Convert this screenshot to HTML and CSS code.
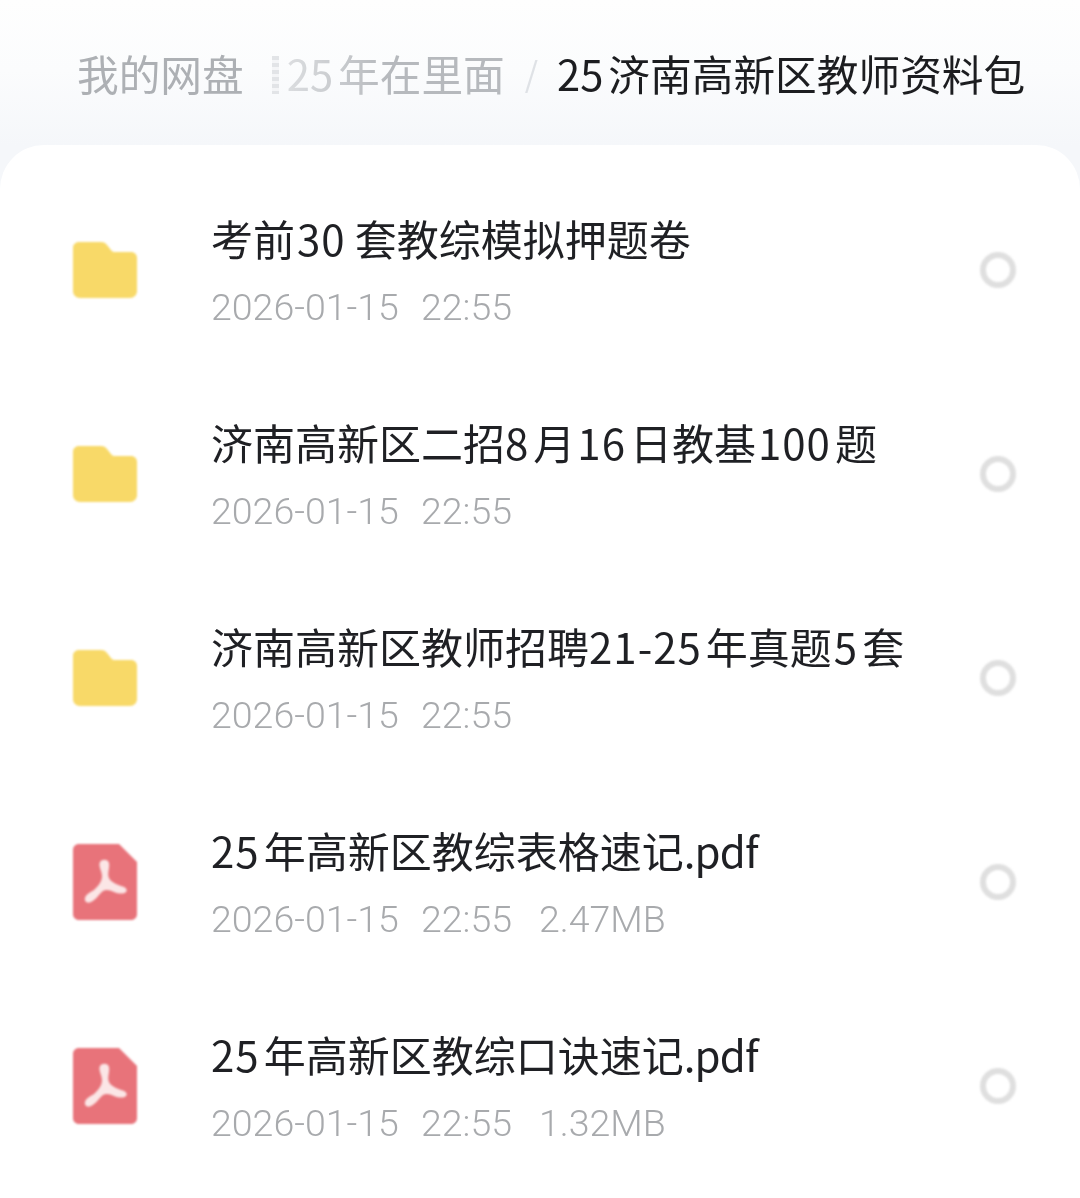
FILE: index.html
```html
<!DOCTYPE html>
<html lang="zh-CN">
<head>
  <meta charset="UTF-8" />
  <title>我的网盘</title>
  <link rel="stylesheet" href="styles.css">
</head>
<body>

  <nav class="crumbs">
    <span class="crumb">我的网盘</span>
    <span class="crumb-clip"></span>
    <span class="crumb crumb-faded"><i>25</i>年在里面</span>
    <span class="crumb-sep">/</span>
    <span class="crumb-current"><i>25</i>济南高新区教师资料包</span>
  </nav>

  <ul class="file-list">
    <li class="file-row">
      <svg class="icon-folder" viewBox="0 0 64 56"><path d="M6 0H28C31 0 32.500 1 34 3L38 8C39 9.500 40 10 42 10H58C61.500 10 64 12.500 64 16V49C64 53 61 56 57 56H7C3 56 0 53 0 49V6C0 2.500 2.500 0 6 0Z"/></svg>
      <div class="file-info">
        <div class="file-name">考前<i class="wide">30</i>套教综模拟押题卷</div>
        <div class="file-meta"><span>2026-01-15</span><span>22:55</span></div>
      </div>
      <span class="radio"></span>
    </li>
    <li class="file-row">
      <svg class="icon-folder" viewBox="0 0 64 56"><path d="M6 0H28C31 0 32.500 1 34 3L38 8C39 9.500 40 10 42 10H58C61.500 10 64 12.500 64 16V49C64 53 61 56 57 56H7C3 56 0 53 0 49V6C0 2.500 2.500 0 6 0Z"/></svg>
      <div class="file-info">
        <div class="file-name">济南高新区二招<i>8</i>月<i>16</i>日教基<i>100</i>题</div>
        <div class="file-meta"><span>2026-01-15</span><span>22:55</span></div>
      </div>
      <span class="radio"></span>
    </li>
    <li class="file-row">
      <svg class="icon-folder" viewBox="0 0 64 56"><path d="M6 0H28C31 0 32.500 1 34 3L38 8C39 9.500 40 10 42 10H58C61.500 10 64 12.500 64 16V49C64 53 61 56 57 56H7C3 56 0 53 0 49V6C0 2.500 2.500 0 6 0Z"/></svg>
      <div class="file-info">
        <div class="file-name">济南高新区教师招聘<i>21-25</i>年真题<i>5</i>套</div>
        <div class="file-meta"><span>2026-01-15</span><span>22:55</span></div>
      </div>
      <span class="radio"></span>
    </li>
    <li class="file-row">
      <svg class="icon-pdf" viewBox="0 0 64 76"><path d="M6 0H46L64 18V70C64 73.500 61.500 76 58 76H6C2.500 76 0 73.500 0 70V6C0 2.500 2.500 0 6 0Z" fill="#e8737a"/><path d="M27 18C29 15 35 15 36 19C37 24 34 29 36 34C38 38 43 40 48 42C53 43 55 46 53 48C51 50 46 50 41 48C37 46 33 45 30 47C26 50 23 56 18 58C14 60 11 57 12 54C13 50 18 48 21 46C25 42 29 38 29 32C29 27 25 22 27 18Z" fill="#fbe6e6"/></svg>
      <div class="file-info">
        <div class="file-name"><i>25</i>年高新区教综表格速记<b>.pdf</b></div>
        <div class="file-meta"><span>2026-01-15</span><span>22:55</span><span>2.47MB</span></div>
      </div>
      <span class="radio"></span>
    </li>
    <li class="file-row">
      <svg class="icon-pdf" viewBox="0 0 64 76"><path d="M6 0H46L64 18V70C64 73.500 61.500 76 58 76H6C2.500 76 0 73.500 0 70V6C0 2.500 2.500 0 6 0Z" fill="#e8737a"/><path d="M27 18C29 15 35 15 36 19C37 24 34 29 36 34C38 38 43 40 48 42C53 43 55 46 53 48C51 50 46 50 41 48C37 46 33 45 30 47C26 50 23 56 18 58C14 60 11 57 12 54C13 50 18 48 21 46C25 42 29 38 29 32C29 27 25 22 27 18Z" fill="#fbe6e6"/></svg>
      <div class="file-info">
        <div class="file-name"><i>25</i>年高新区教综口诀速记<b>.pdf</b></div>
        <div class="file-meta"><span>2026-01-15</span><span>22:55</span><span>1.32MB</span></div>
      </div>
      <span class="radio"></span>
    </li>
  </ul>

</body>
</html>
```

FILE: styles.css
```css
* { box-sizing: border-box; }

html, body { height: 100%; }

body {
  margin: 0;
  overflow: hidden;
  font-family: "Noto Sans CJK SC", "Noto Sans", sans-serif;
  background: linear-gradient(#fefefe 0, #fbfcfd 70px, #f5f7fa 145px);
}

i, b { font-style: normal; font-weight: inherit; }

.crumbs {
  height: 145px;
  padding: 43px 0 0 77px;
  display: flex;
  align-items: flex-start;
  font-size: 41.7px;
  line-height: 60px;
  white-space: nowrap;
}

.crumbs i { margin-right: 5px; }

.crumb { color: #adb0b4; }

/* cut-off edge of the crumb scrolled under the fade */
.crumb-clip {
  margin: 13px 0 0 28px;
  width: 7px;
  height: 38px;
  background: repeating-linear-gradient(#e2e4e7 0, #e2e4e7 4px, #f4f5f7 4px, #f4f5f7 7px);
}

.crumb-faded {
  margin-left: 8px;
  width: 218px;
  color: #b6b9bd;
  -webkit-mask-image: linear-gradient(90deg, rgba(0,0,0,0.45) 0, #000 45%);
  mask-image: linear-gradient(90deg, rgba(0,0,0,0.45) 0, #000 45%);
}

.crumb-sep {
  margin-left: 20px;
  color: #dfe2e6;
  font-size: 34px;
}

.crumb-current {
  margin-left: 19px;
  color: #1c1d20;
}

.file-list {
  list-style: none;
  margin: 0;
  height: 1053px;
  padding: 23px 64px 0 73px;
  background: #fff;
  border-radius: 44px 44px 0 0;
}

.file-row {
  height: 204px;
  display: flex;
  align-items: center;
}

.icon-folder { width: 64px; height: 56px; flex: none; fill: #f8d968; }
.icon-pdf { width: 64px; height: 76px; flex: none; }

.file-info {
  margin-left: 74px;
  flex: 1;
  min-width: 0;
}

.file-name {
  font-size: 42px;
  line-height: 60px;
  color: #1f2024;
  white-space: nowrap;
}

.file-name i { margin: 0 4px 0 2px; letter-spacing: 1px; }
.file-name i:first-child { margin-left: 0; }
.file-name i.wide { margin: 0 9px 0 2px; }
.file-name b { letter-spacing: -0.8px; }

.file-meta {
  margin-top: 14px;
  display: flex;
  gap: 22px;
  font-family: Roboto, "Noto Sans", sans-serif;
  font-weight: 300;
  font-size: 37.5px;
  line-height: 50px;
  color: #a8aaad;
}

.file-meta span + span + span { margin-left: 5px; }

.radio {
  width: 36px;
  height: 36px;
  flex: none;
  border: 6px solid #dfdfdf;
  border-radius: 50%;
}

.file-name, .crumbs, .file-meta { filter: blur(0.4px); }
.icon-folder, .icon-pdf, .radio { filter: blur(0.8px); }
```
